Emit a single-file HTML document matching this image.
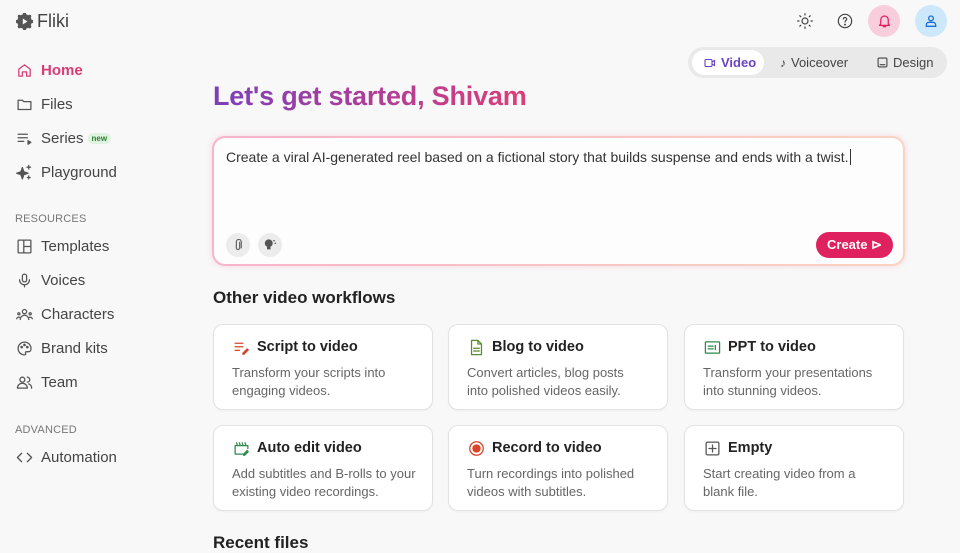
<!DOCTYPE html>
<html><head><meta charset="utf-8"><style>
*{box-sizing:border-box;margin:0;padding:0}
body{width:960px;height:541px;overflow:hidden;background:#f8f8f8;font-family:"Liberation Sans",sans-serif;color:#333;position:relative}
.abs{position:absolute}
.nav{position:absolute;left:16px;display:flex;align-items:center;font-size:15px;color:#444}
.nav svg{width:17px;height:17px;margin-right:8px;fill:none;stroke:#555;stroke-width:1.8;stroke-linecap:round;stroke-linejoin:round}
.sec{position:absolute;left:15px;font-size:11px;color:#777;letter-spacing:.2px}
.card{position:absolute;width:220px;height:86px;background:#fff;border:1px solid #e2e2e2;border-radius:10px;box-shadow:0 1px 2px rgba(0,0,0,.04)}
.card .t{position:absolute;left:43px;top:14px;font-size:14.5px;font-weight:bold;color:#222}
.card .d{position:absolute;left:18px;top:39px;font-size:13px;line-height:18px;color:#666;width:172px}
.card svg{position:absolute;left:19px;top:14px;width:17px;height:17px;fill:none;stroke-width:1.8;stroke-linecap:round;stroke-linejoin:round}
</style></head><body>
<div class="abs" style="left:16px;top:11px;display:flex;align-items:center;font-size:18px;color:#444">
<svg width="17" height="17" viewBox="0 0 20 20" style="margin-right:4px"><circle cx="10" cy="10" r="8.5" fill="#555"/><g fill="#555"><circle cx="10" cy="1.5" r="2"/><circle cx="10" cy="18.5" r="2"/><circle cx="1.5" cy="10" r="2"/><circle cx="18.5" cy="10" r="2"/><circle cx="4" cy="4" r="2"/><circle cx="16" cy="4" r="2"/><circle cx="4" cy="16" r="2"/><circle cx="16" cy="16" r="2"/></g><path d="M8 6.5v7l5.5-3.5z" fill="#f8f8f8"/></svg>Fliki</div>

<div class="nav" style="top:62px;color:#d63d76;font-weight:bold"><svg viewBox="0 0 24 24" style="stroke:#d63d76"><path d="M4 10l8-6 8 6v10h-5v-6h-6v6H4z"/></svg>Home</div>
<div class="nav" style="top:96px"><svg viewBox="0 0 24 24"><path d="M3 6h6l2 2h10v11H3z"/></svg>Files</div>
<div class="nav" style="top:130px"><svg viewBox="0 0 24 24"><path d="M3 6h13M3 11h13M3 16h8"/><path d="M17 15l4 2.5-4 2.5z" fill="#555"/></svg>Series <span style="font-size:8px;background:#dff3e0;color:#2f7d32;border-radius:6px;padding:1px 4px;margin-left:4px;font-weight:bold">new</span></div>
<div class="nav" style="top:164px"><svg viewBox="0 0 24 24"><path d="M9 5l2 6 6 2-6 2-2 6-2-6-6-2 6-2z" fill="#555"/><path d="M18 2v5M15.5 4.5h5M18 17v4M16 19h4"/></svg>Playground</div>
<div class="sec" style="top:213px">RESOURCES</div>
<div class="nav" style="top:238px"><svg viewBox="0 0 24 24"><rect x="3" y="3" width="18" height="18" rx="1"/><path d="M11 3v18M11 12h10"/></svg>Templates</div>
<div class="nav" style="top:272px"><svg viewBox="0 0 24 24"><rect x="9" y="3" width="6" height="11" rx="3"/><path d="M5 11a7 7 0 0014 0M12 18v3"/></svg>Voices</div>
<div class="nav" style="top:306px"><svg viewBox="0 0 24 24"><circle cx="12" cy="8" r="3"/><path d="M6 19a6 6 0 0112 0"/><circle cx="4" cy="11" r="1.5"/><circle cx="20" cy="11" r="1.5"/><path d="M1 18a3 3 0 014-2M23 18a3 3 0 00-4-2"/></svg>Characters</div>
<div class="nav" style="top:340px"><svg viewBox="0 0 24 24"><path d="M12 3a9 9 0 100 18c1.5 0 2-1 1.5-2s0-2.5 1.5-2.5H18a3 3 0 003-3A9 9 0 0012 3z"/><circle cx="8" cy="10" r="1" fill="#555"/><circle cx="12" cy="7" r="1" fill="#555"/><circle cx="16" cy="10" r="1" fill="#555"/></svg>Brand kits</div>
<div class="nav" style="top:374px"><svg viewBox="0 0 24 24"><circle cx="9" cy="8" r="3.5"/><path d="M2 20a7 7 0 0114 0z"/><path d="M16 4.5a3.5 3.5 0 010 7M18 14a6 6 0 014 6"/></svg>Team</div>
<div class="sec" style="top:424px">ADVANCED</div>
<div class="nav" style="top:449px"><svg viewBox="0 0 24 24"><path d="M8 6l-6 6 6 6M16 6l6 6-6 6"/></svg>Automation</div>

<svg class="abs" style="left:797px;top:13px" width="16" height="16" viewBox="0 0 24 24" fill="none" stroke="#444" stroke-width="1.8" stroke-linecap="round"><circle cx="12" cy="12" r="4.5"/><path d="M12 1v2M12 21v2M1 12h2M21 12h2M4.2 4.2l1.4 1.4M18.4 18.4l1.4 1.4M4.2 19.8l1.4-1.4M18.4 5.6l1.4-1.4"/></svg>
<svg class="abs" style="left:837px;top:13px" width="16" height="16" viewBox="0 0 24 24" fill="none" stroke="#444" stroke-width="1.8" stroke-linecap="round"><circle cx="12" cy="12" r="10"/><path d="M9.5 9a2.5 2.5 0 115 .5c0 1.5-2.5 2-2.5 4"/><circle cx="12" cy="17.5" r=".6" fill="#444"/></svg>
<div class="abs" style="left:868px;top:5px;width:32px;height:32px;border-radius:50%;background:#f8cedd"></div>
<svg class="abs" style="left:877px;top:13px" width="15" height="16" viewBox="0 0 24 24" fill="none" stroke="#e0215f" stroke-width="2" stroke-linecap="round" stroke-linejoin="round"><path d="M6 17V10a6 6 0 0112 0v7l2 2H4z"/><path d="M10 21h4"/></svg>
<div class="abs" style="left:915px;top:5px;width:32px;height:32px;border-radius:50%;background:#cde7fb"></div>
<svg class="abs" style="left:923px;top:13px" width="16" height="16" viewBox="0 0 24 24" fill="none" stroke="#1a6fd0" stroke-width="2" stroke-linecap="round"><circle cx="12" cy="8" r="3.5"/><path d="M5 20v-2a4 4 0 014-4h6a4 4 0 014 4v2z"/></svg>

<div class="abs" style="left:688px;top:47px;width:259px;height:31px;border-radius:16px;background:#e9e9e9"></div>
<div class="abs" style="left:692px;top:50px;width:72px;height:25px;border-radius:13px;background:#fff"></div>
<div class="abs" style="left:704px;top:55px;font-size:13px;font-weight:bold;color:#6a44c2;display:flex;align-items:center"><svg width="12" height="10" viewBox="0 0 24 20" fill="none" stroke="#6a44c2" stroke-width="2.2" style="margin-right:5px"><rect x="2" y="3" width="14" height="14" rx="2"/><path d="M16 8l5-3v10l-5-3"/></svg>Video</div>
<div class="abs" style="left:780px;top:55px;font-size:13px;color:#444;display:flex;align-items:center"><span style="font-size:12px;margin-right:5px">♪</span>Voiceover</div>
<div class="abs" style="left:877px;top:55px;font-size:13px;color:#444;display:flex;align-items:center"><svg width="11" height="11" viewBox="0 0 20 20" fill="none" stroke="#444" stroke-width="2" style="margin-right:5px"><rect x="2" y="2" width="16" height="16" rx="2"/><path d="M5 14h10"/></svg>Design</div>

<div class="abs" style="left:213px;top:81px;font-size:27px;font-weight:bold;background:linear-gradient(90deg,#7c3fb8,#dd3e78);-webkit-background-clip:text;color:transparent;letter-spacing:-.2px">Let's get started, Shivam</div>

<div class="abs" style="left:212px;top:136px;width:693px;height:130px;border-radius:13px;background:linear-gradient(90deg,#f7b4cc,#f9d4c0);padding:2px;box-shadow:0 0 6px rgba(247,180,204,.5)">
<div style="width:100%;height:100%;background:#fdfdfd;border-radius:11px;position:relative">
<div class="abs" style="left:12px;top:11px;font-size:14px;color:#333">Create a viral AI-generated reel based on a fictional story that builds suspense and ends with a twist.<span style="border-left:1px solid #333;margin-left:1px"></span></div>
<div class="abs" style="left:12px;top:95px;width:24px;height:24px;border-radius:50%;background:#ececec"></div>
<svg class="abs" style="left:19px;top:101px" width="10" height="13" viewBox="0 0 10 16" fill="none" stroke="#666" stroke-width="1.5" stroke-linecap="round"><path d="M7 4v7a2 2 0 01-4 0V3.5a3 3 0 016 0V11"/></svg>
<div class="abs" style="left:44px;top:95px;width:24px;height:24px;border-radius:50%;background:#ececec"></div>
<svg class="abs" style="left:49px;top:100px" width="15" height="14" viewBox="0 0 16 16"><circle cx="6" cy="6" r="4.5" fill="#555"/><rect x="4" y="10" width="4" height="3" fill="#555"/><circle cx="12" cy="3" r=".9" fill="#555"/><circle cx="13.5" cy="6" r=".9" fill="#555"/></svg>
<div class="abs" style="left:602px;top:94px;width:77px;height:26px;border-radius:13px;background:#e0215f;color:#fff;font-size:13px;font-weight:bold;line-height:26px;text-align:center">Create ⊳</div>
</div></div>

<div class="abs" style="left:213px;top:288px;font-size:17px;font-weight:bold;color:#222">Other video workflows</div>

<div class="card" style="left:213px;top:324px"><svg viewBox="0 0 24 24" stroke="#d9452b"><path d="M3 6h11M3 11h11M3 16h6"/><path d="M14 20l6-6 1.5 1.5-6 6H14z" fill="#d9452b"/></svg><div class="t">Script to video</div><div class="d">Transform your scripts into engaging videos.</div></div>
<div class="card" style="left:448px;top:324px"><svg viewBox="0 0 24 24" stroke="#5a8a2e"><path d="M5 2h9l5 5v15H5z"/><path d="M14 2v5h5M8 13h8M8 17h8"/></svg><div class="t">Blog to video</div><div class="d">Convert articles, blog posts into polished videos easily.</div></div>
<div class="card" style="left:684px;top:324px"><svg viewBox="0 0 24 24" stroke="#2e8a4a"><rect x="2" y="4" width="20" height="16" rx="1"/><path d="M6 10h7M6 14h7M16 9v6"/></svg><div class="t">PPT to video</div><div class="d">Transform your presentations into stunning videos.</div></div>
<div class="card" style="left:213px;top:425px"><svg viewBox="0 0 24 24" stroke="#2e8a4a"><path d="M3 8v12h11M3 8h18v4"/><path d="M5 4l1 3M9 4l1 3M13 4l1 3M17 4l1 3"/><path d="M15 20l5-5 1.5 1.5-5 5H15z" fill="#2e8a4a"/></svg><div class="t">Auto edit video</div><div class="d" style="width:195px">Add subtitles and B-rolls to your existing video recordings.</div></div>
<div class="card" style="left:448px;top:425px"><svg viewBox="0 0 24 24" stroke="#d9452b"><circle cx="12" cy="12" r="9.5"/><circle cx="12" cy="12" r="5" fill="#d9452b"/></svg><div class="t">Record to video</div><div class="d">Turn recordings into polished videos with subtitles.</div></div>
<div class="card" style="left:684px;top:425px"><svg viewBox="0 0 24 24" stroke="#555"><rect x="3" y="3" width="18" height="18" rx="2"/><path d="M12 7v10M7 12h10"/></svg><div class="t">Empty</div><div class="d">Start creating video from a blank file.</div></div>

<div class="abs" style="left:213px;top:533px;font-size:17px;font-weight:bold;color:#222">Recent files</div>
</body></html>
